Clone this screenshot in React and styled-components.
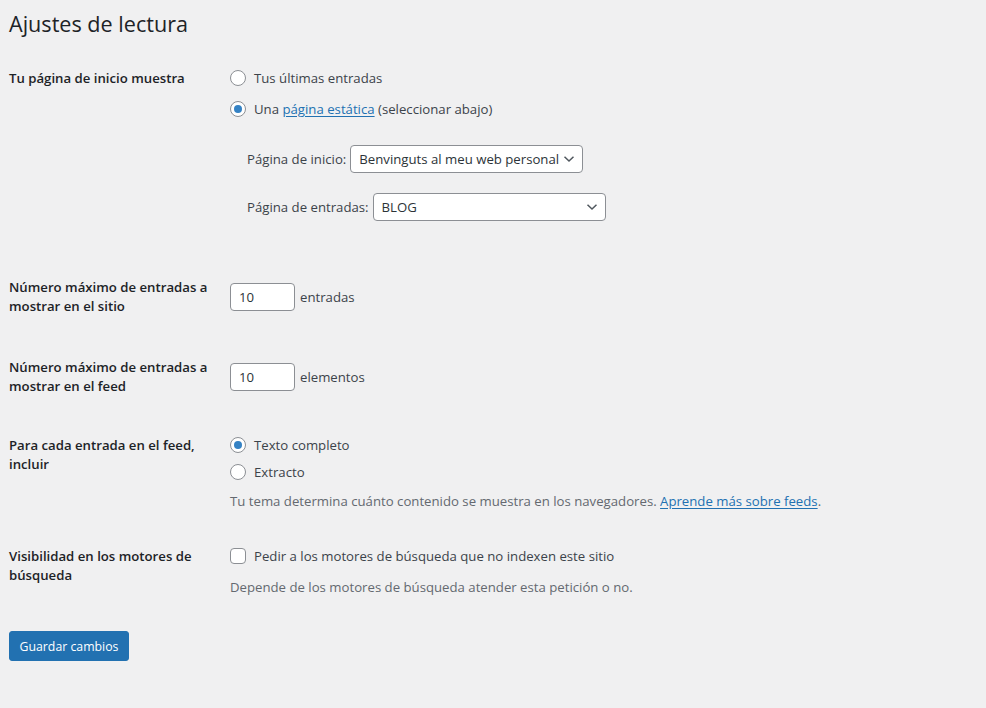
import React from "react";
import styled, { createGlobalStyle } from "styled-components";

const Global = createGlobalStyle`
  html, body { margin: 0; padding: 0; background: #f0f0f1; }
  body {
    font-family: "Open Sans", "Noto Sans", sans-serif;
    font-size: 13.2px;
    color: #3c434a;
    min-height: 708px;
  }
  * { box-sizing: border-box; }
`;

const Page = styled.div`
  padding: 9px 9px 40px 9px;
`;

const Title = styled.h1`
  margin: 0;
  font-size: 21.6px;
  font-weight: 400;
  line-height: 30px;
  color: #1d2327;
`;

const Form = styled.form`
  display: flex;
  flex-direction: column;
`;

const Row = styled.div`
  display: grid;
  grid-template-columns: 221px 1fr;
  align-items: start;
  margin-top: ${(p) => p.$mt}px;
`;

const Label = styled.div`
  font-weight: 600;
  color: #1d2327;
  line-height: 19px;
  padding-top: ${(p) => p.$pt || 0}px;
  padding-right: 10px;
`;

const Field = styled.div`
  display: flex;
  flex-direction: column;
  padding-top: ${(p) => p.$pt || 0}px;
`;

const OptionLine = styled.label`
  display: flex;
  align-items: center;
  height: 22px;
  gap: 8px;
  margin-bottom: ${(p) => p.$mb || 0}px;
  color: #3c434a;
`;

const Radio = styled.input.attrs({ type: "radio" })`
  appearance: none;
  margin: 0;
  width: 16px;
  height: 16px;
  border: 1px solid #8c8f94;
  border-radius: 50%;
  background: #fff;
  display: grid;
  place-items: center;
  flex: none;
  &:checked::before {
    content: "";
    width: 8px;
    height: 8px;
    border-radius: 50%;
    background: #3582c4;
  }
`;

const Checkbox = styled.input.attrs({ type: "checkbox" })`
  appearance: none;
  margin: 0;
  width: 16px;
  height: 16px;
  border: 1px solid #8c8f94;
  border-radius: 4px;
  background: #fff;
  flex: none;
`;

const Link = styled.a`
  color: #2271b1;
  text-decoration: underline;
  text-underline-offset: 2px;
`;

const SelectLine = styled.div`
  display: flex;
  align-items: center;
  gap: 4px;
  padding-left: 17px;
  margin-top: ${(p) => p.$mt}px;
`;

const SelectBox = styled.div`
  position: relative;
  width: 233px;
  height: 28px;
  border: 1px solid #8c8f94;
  border-radius: 4px;
  background: #fff;
  color: #2c3338;
  display: flex;
  align-items: center;
  padding: 0 24px 0 8px;
  white-space: nowrap;
  overflow: hidden;
`;

const Chevron = styled.svg`
  position: absolute;
  right: 7px;
  top: 50%;
  transform: translateY(-50%);
`;

const InputLine = styled.div`
  display: flex;
  align-items: center;
  gap: 5px;
  margin-top: ${(p) => p.$mt || 0}px;
`;

const NumberInput = styled.div`
  width: 65px;
  height: 28px;
  border: 1px solid #8c8f94;
  border-radius: 4px;
  background: #fff;
  color: #2c3338;
  display: flex;
  align-items: center;
  padding-left: 8px;
`;

const Description = styled.p`
  margin: ${(p) => p.$mt}px 0 0 0;
  color: #646970;
  line-height: 21px;
`;

const Button = styled.button`
  margin-top: ${(p) => p.$mt}px;
  width: 120px;
  height: 30px;
  border: 1px solid #2271b1;
  border-radius: 3px;
  background: #2271b1;
  color: #fff;
  font-family: inherit;
  font-size: 12.3px;
  padding: 0;
  cursor: pointer;
`;

const ChevronIcon = () => (
  <Chevron width="12" height="8" viewBox="0 0 12 8">
    <path d="M1.5 1.8 L6 6 L10.5 1.8" fill="none" stroke="#50575e" strokeWidth="1.5" />
  </Chevron>
);

const Select = ({ children }) => (
  <SelectBox>
    {children}
    <ChevronIcon />
  </SelectBox>
);

export default function App() {
  return (
    <Page>
      <Global />
      <Title>Ajustes de lectura</Title>
      <Form onSubmit={(e) => e.preventDefault()}>
        <Row $mt={28}>
          <Label $pt={2}>Tu página de inicio muestra</Label>
          <Field>
            <OptionLine $mb={9}>
              <Radio name="front" />
              Tus últimas entradas
            </OptionLine>
            <OptionLine>
              <Radio name="front" defaultChecked />
              <span>
                Una <Link href="#">página estática</Link> (seleccionar abajo)
              </span>
            </OptionLine>
            <SelectLine $mt={25}>
              Página de inicio:
              <Select>Benvinguts al meu web personal</Select>
            </SelectLine>
            <SelectLine $mt={20}>
              Página de entradas:
              <Select>BLOG</Select>
            </SelectLine>
          </Field>
        </Row>

        <Row $mt={57}>
          <Label>Número máximo de entradas a mostrar en el sitio</Label>
          <Field>
            <InputLine $mt={5}>
              <NumberInput>10</NumberInput>
              entradas
            </InputLine>
          </Field>
        </Row>

        <Row $mt={42}>
          <Label>Número máximo de entradas a mostrar en el feed</Label>
          <Field>
            <InputLine $mt={5}>
              <NumberInput>10</NumberInput>
              elementos
            </InputLine>
          </Field>
        </Row>

        <Row $mt={38}>
          <Label $pt={2}>Para cada entrada en el feed, incluir</Label>
          <Field>
            <OptionLine $mb={5}>
              <Radio name="feed" defaultChecked />
              Texto completo
            </OptionLine>
            <OptionLine>
              <Radio name="feed" />
              Extracto
            </OptionLine>
            <Description $mt={8}>
              Tu tema determina cuánto contenido se muestra en los navegadores.{" "}
              <Link href="#">Aprende más sobre feeds</Link>.
            </Description>
          </Field>
        </Row>

        <Row $mt={33}>
          <Label $pt={2}>Visibilidad en los motores de búsqueda</Label>
          <Field>
            <OptionLine>
              <Checkbox />
              Pedir a los motores de búsqueda que no indexen este sitio
            </OptionLine>
            <Description $mt={10}>
              Depende de los motores de búsqueda atender esta petición o no.
            </Description>
          </Field>
        </Row>

        <div>
          <Button $mt={33}>Guardar cambios</Button>
        </div>
      </Form>
    </Page>
  );
}
